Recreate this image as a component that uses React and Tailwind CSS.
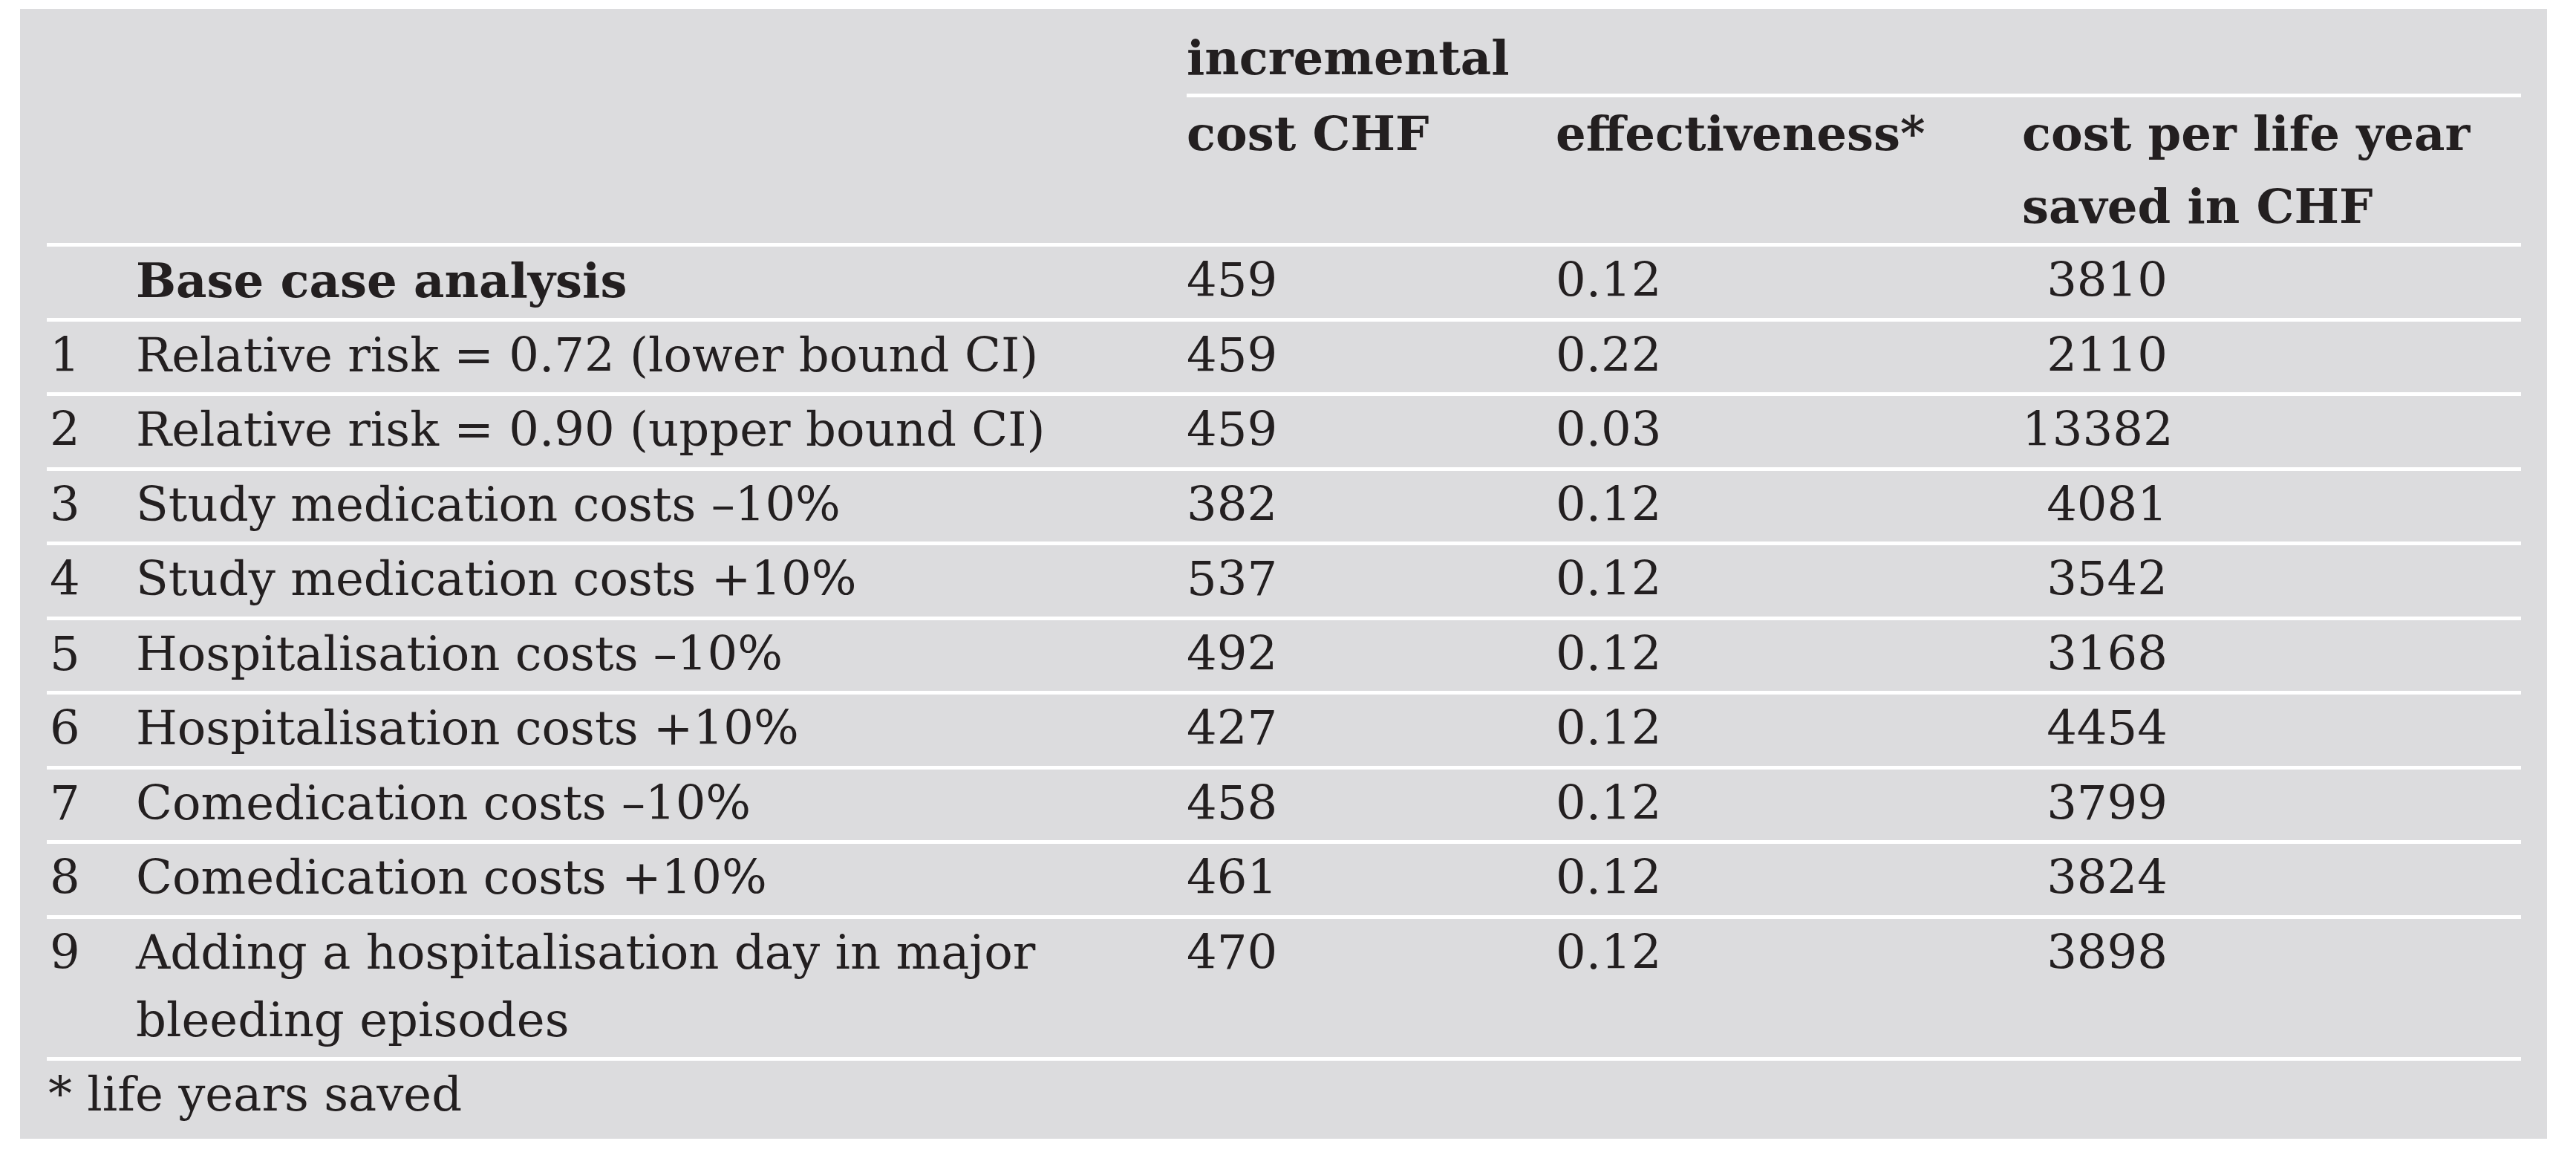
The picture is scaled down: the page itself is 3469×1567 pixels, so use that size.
import React from 'react';

const ROWS = [
  { n: '', label: 'Base case analysis', bold: true, cost: '459', eff: '0.12', per: '3810' },
  { n: '1', label: 'Relative risk = 0.72 (lower bound CI)', cost: '459', eff: '0.22', per: '2110' },
  { n: '2', label: 'Relative risk = 0.90 (upper bound CI)', cost: '459', eff: '0.03', per: '13382' },
  { n: '3', label: 'Study medication costs –10%', cost: '382', eff: '0.12', per: '4081' },
  { n: '4', label: 'Study medication costs +10%', cost: '537', eff: '0.12', per: '3542' },
  { n: '5', label: 'Hospitalisation costs –10%', cost: '492', eff: '0.12', per: '3168' },
  { n: '6', label: 'Hospitalisation costs +10%', cost: '427', eff: '0.12', per: '4454' },
  { n: '7', label: 'Comedication costs –10%', cost: '458', eff: '0.12', per: '3799' },
  { n: '8', label: 'Comedication costs +10%', cost: '461', eff: '0.12', per: '3824' },
  { n: '9', label: 'Adding a hospitalisation day in major bleeding episodes', cost: '470', eff: '0.12', per: '3898' },
];

const GRID = 'grid grid-cols-[120px_1415px_497px_628px_672px]';

export default function App() {
  return (
    <div className="min-h-screen bg-white pl-[27px] pt-[12px] font-['DejaVu_Serif',serif] text-[64px] text-[#231f20]">
      <div className="w-[3403px] h-[1521px] bg-[#dcdcde] pl-[36px] pr-[35px]">
        {/* header */}
        <div className={GRID}>
          <div className="col-start-3 col-span-3 pt-[20px] pb-[3px] leading-[91px] font-bold border-b-[5px] border-white">
            incremental
          </div>
        </div>
        <div className={`${GRID} border-b-[5px] border-white leading-[98px] font-bold`}>
          <div />
          <div />
          <div>cost CHF</div>
          <div>effectiveness*</div>
          <div>
            cost per life year
            <br />
            saved in CHF
          </div>
        </div>

        {/* body */}
        {ROWS.map((r, i) => (
          <div key={i} className={`${GRID} border-b-[5px] border-white leading-[91px] pb-[4.5px]`}>
            <div className="pl-[4px]">{r.n}</div>
            <div className={r.bold ? 'font-bold' : ''}>{r.label}</div>
            <div>{r.cost}</div>
            <div>{r.eff}</div>
            <div>
              <div className="w-[196px] text-right">{r.per}</div>
            </div>
          </div>
        ))}

        <div className="leading-[91px] pl-[2px]">* life years saved</div>
      </div>
    </div>
  );
}
